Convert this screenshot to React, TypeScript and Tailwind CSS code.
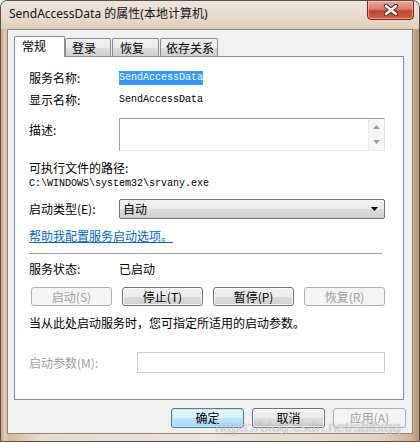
import React from "react";

const cjk = "font-['Noto_Sans_CJK_SC',sans-serif]";
const mono = "font-['Liberation_Mono','Noto_Sans_CJK_SC',monospace]";

function Btn({
  children,
  disabled,
  def,
  className = "",
}: {
  children: React.ReactNode;
  disabled?: boolean;
  def?: boolean;
  className?: string;
}) {
  const base =
    "flex items-center justify-center rounded-[3px] text-[12px] leading-none " + cjk;
  if (disabled)
    return (
      <div className={`${base} border border-[#adb2b5] bg-[#f4f4f4] text-[#a0a0a0] ${className}`}>
        {children}
      </div>
    );
  if (def)
    return (
      <div
        className={`${base} border border-[#3c7fb1] bg-[linear-gradient(180deg,#eaf6fd_0%,#d9f0fc_50%,#bee6fd_51%,#a7d9f5_100%)] text-black shadow-[inset_0_0_0_1px_#c6e8fb] ${className}`}
      >
        {children}
      </div>
    );
  return (
    <div
      className={`${base} border border-[#707070] bg-[linear-gradient(180deg,#f2f2f2_0%,#ebebeb_50%,#dddddd_51%,#cfcfcf_100%)] text-black shadow-[inset_0_0_0_1px_#fcfcfc] ${className}`}
    >
      {children}
    </div>
  );
}

export default function App() {
  return (
    <div className="relative h-[442px] w-[420px] overflow-hidden rounded-t-[7px] border border-[#5a4e44] bg-[linear-gradient(90deg,#c9a888_0%,#e4cdb7_1%,#d8b898_2%,#e9dccf_10%,#eee4da_50%,#e4d3c3_90%,#d4b396_98%,#b89474_100%)] flex flex-col">
      {/* title bar */}
      <div className="flex h-[28px] shrink-0 items-start justify-between bg-[linear-gradient(180deg,#ede4db_0%,#e8dbcd_60%,#e0ccb8_100%)]">
        <div className={`pl-[8px] pt-[4px] text-[12px] leading-[18px] text-[#111] font-['Noto_Sans','Noto_Sans_CJK_SC',sans-serif]`}>
          SendAccessData 的属性(本地计算机)
        </div>
        <div className="mr-[5px] mt-[-1px] flex h-[20px] w-[47px] items-center justify-center rounded-b-[4px] border border-[#6e2a1e] bg-[linear-gradient(180deg,#e9a999_0%,#d9806b_45%,#c2432b_55%,#d2604a_100%)] shadow-[inset_0_0_0_1px_rgba(255,220,210,0.5)]">
          <svg width="16" height="12" viewBox="0 0 16 12">
            <path d="M3 2 L13 10 M13 2 L3 10" stroke="#4a2a26" strokeWidth="4.4" strokeLinecap="round" />
            <path d="M3 2 L13 10 M13 2 L3 10" stroke="#ffffff" strokeWidth="2.4" strokeLinecap="round" />
          </svg>
        </div>
      </div>

      {/* client area */}
      <div className="ml-[6px] mr-[6px] flex h-[405px] shrink-0 flex-col border border-[#8a8580] bg-[#f0f0f0] pl-[6px] pt-[5px]">
        {/* tabs */}
        <div className={`flex h-[21px] items-end text-[12px] leading-none text-black ${cjk}`}>
          <div className="relative top-px z-10 flex h-[21px] w-[51px] items-start rounded-t-[2px] border border-b-0 border-[#898c95] bg-white pl-[7px] pt-[3px]">
            常规
          </div>
          <div className="flex h-[18px] w-[46px] items-center rounded-t-[2px] border border-b-0 border-[#898c95] bg-[linear-gradient(180deg,#f2f2f2_0%,#ebebeb_50%,#dddddd_51%,#cfcfcf_100%)] pl-[6px]">
            登录
          </div>
          <div className="ml-px flex h-[18px] w-[47px] items-center rounded-t-[2px] border border-b-0 border-[#898c95] bg-[linear-gradient(180deg,#f2f2f2_0%,#ebebeb_50%,#dddddd_51%,#cfcfcf_100%)] pl-[7px]">
            恢复
          </div>
          <div className="ml-px flex h-[18px] w-[58px] items-center rounded-t-[2px] border border-b-0 border-[#898c95] bg-[linear-gradient(180deg,#f2f2f2_0%,#ebebeb_50%,#dddddd_51%,#cfcfcf_100%)] pl-[5px]">
            依存关系
          </div>
        </div>

        {/* tab panel */}
        <div className={`flex h-[344px] w-[390px] flex-col border border-[#898c95] bg-white pl-[14px] pr-[18px] text-[12px] leading-[16px] text-black ${cjk}`}>
          <div className="mt-[13px] flex h-[16px] items-center">
            <div className="w-[90px]">服务名称:</div>
            <div className={`bg-[#3399ff] px-0 text-[10px] leading-[14px] text-white ${mono}`}>SendAccessData</div>
          </div>
          <div className="mt-[6px] flex h-[16px] items-center">
            <div className="w-[90px]">显示名称:</div>
            <div className={`text-[10px] ${mono}`}>SendAccessData</div>
          </div>
          <div className="mt-[10px] flex items-start">
            <div className="mt-[4px] w-[90px]">描述:</div>
            <div className="flex h-[33px] flex-1 border border-[#a0a0a0] border-r-[#dfe3e8] border-b-[#e3e9ef] bg-white">
              <div className="flex-1" />
              <div className="flex w-[16px] flex-col items-center justify-between border-l border-[#e8e8e8] bg-[#f6f6f6] py-[6px]">
                <svg width="7" height="4" viewBox="0 0 7 4"><path d="M0 4 L3.5 0 L7 4 Z" fill="#9a9a9a" /></svg>
                <svg width="7" height="4" viewBox="0 0 7 4"><path d="M0 0 L7 0 L3.5 4 Z" fill="#9a9a9a" /></svg>
              </div>
            </div>
          </div>
          <div className="mt-[9px] h-[16px]">可执行文件的路径:</div>
          <div className={`h-[16px] text-[10px] leading-[16px] ${mono}`}>C:\WINDOWS\system32\srvany.exe</div>
          <div className="mt-[7px] flex items-center">
            <div className="w-[90px]">启动类型(E):</div>
            <div className="flex h-[20px] flex-1 items-center justify-between rounded-[2px] border border-[#707070] bg-[linear-gradient(180deg,#f2f2f2_0%,#ebebeb_50%,#dddddd_51%,#cfcfcf_100%)] pl-[3px] pr-[6px]">
              <span>自动</span>
              <svg width="7" height="4" viewBox="0 0 7 4"><path d="M0 0 L7 0 L3.5 4 Z" fill="#000" /></svg>
            </div>
          </div>
          <div className="mt-[9px] h-[16px] text-[#0066cc] underline">帮助我配置服务启动选项。</div>
          <div className="mr-[3px] mt-[9px] h-px bg-[#a0a0a0]" />
          <div className="mt-[7px] flex h-[16px] items-center">
            <div className="w-[90px]">服务状态:</div>
            <div>已启动</div>
          </div>
          <div className="mt-[10px] grid h-[19px] grid-cols-4 gap-[10px] pl-[2px]">
            <Btn disabled>启动(S)</Btn>
            <Btn>停止(T)</Btn>
            <Btn>暂停(P)</Btn>
            <Btn disabled>恢复(R)</Btn>
          </div>
          <div className="mt-[9px] h-[16px]">当从此处启动服务时，您可指定所适用的启动参数。</div>
          <div className="mt-[21px] flex items-center">
            <div className="w-[108px] text-[#a0a0a0]">启动参数(M):</div>
            <div className="h-[21px] flex-1 border border-[#cfcfcf] bg-white" />
          </div>
        </div>

        {/* bottom buttons */}
        <div className="mr-[6px] mt-[8px] flex justify-end gap-[8px]">
          <Btn def className="h-[20px] w-[73px]">确定</Btn>
          <Btn className="h-[20px] w-[73px]">取消</Btn>
          <Btn disabled className="h-[20px] w-[73px]">应用(A)</Btn>
        </div>
      </div>

      {/* watermark */}
      <div className="pointer-events-none absolute left-[214px] top-[416px] font-['Liberation_Sans',sans-serif] text-[15px] leading-[20px] text-white/60 [text-shadow:0_0_1px_rgba(80,80,80,0.6)]">
        https://blog.csdn.net/sbitxgq
      </div>
    </div>
  );
}
